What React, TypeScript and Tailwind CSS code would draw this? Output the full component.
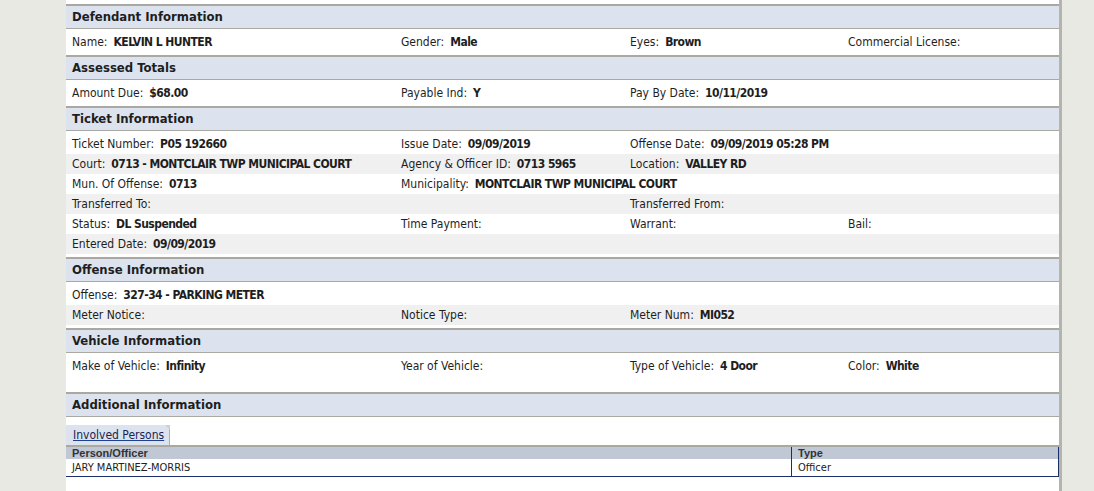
import React from "react";

type Cell = { label: string; value?: string };
type Row = { cells: (Cell | null)[]; shade?: boolean };

const font = "font-['DejaVu_Sans_Condensed','DejaVu_Sans',sans-serif]";

function Field({ cell }: { cell: Cell | null }) {
  if (!cell) return <div className="px-[6px]" />;
  return (
    <div className="px-[6px] whitespace-nowrap overflow-visible text-[12px] leading-[16px]">
      <span>{cell.label}</span>
      {cell.value ? (
        <span className="font-bold tracking-[-0.55px] ml-[6px]">{cell.value}</span>
      ) : null}
    </div>
  );
}

function Header({ title }: { title: string }) {
  return (
    <div className="h-[23px] bg-[#dce3ee] border-b border-[#a9a9a2] px-[6px] flex items-center text-[13px] leading-[16px] font-bold text-[#1e1e1e]">
      {title}
    </div>
  );
}

function Section({
  title,
  rows,
  extra,
}: {
  title: string;
  rows: Row[];
  extra?: React.ReactNode;
}) {
  return (
    <div className="border-t-2 border-[#a9a9a2]">
      <Header title={title} />
      <div className="pt-[3px] pb-[3px]">
        {rows.map((row, i) => (
          <div
            key={i}
            className={`grid grid-cols-[329px_229px_218px_1fr] h-[20px] items-center text-[#1e1e1e] ${
              row.shade ? "bg-[#f0f0f0]" : "bg-white"
            }`}
          >
            {row.cells.map((c, j) => (
              <Field key={j} cell={c} />
            ))}
          </div>
        ))}
        {extra}
      </div>
    </div>
  );
}

export default function App() {
  return (
    <div className={`h-[491px] overflow-hidden bg-[#e9e9e4] flex ${font}`}>
      <div className="w-[66px] shrink-0" />
      <div className="w-[996px] shrink-0 bg-white border-r-[3px] border-[#b4b4ae] pt-[4px]">
        <Section
          title="Defendant Information"
          rows={[
            {
              cells: [
                { label: "Name:", value: "KELVIN L HUNTER" },
                { label: "Gender:", value: "Male" },
                { label: "Eyes:", value: "Brown" },
                { label: "Commercial License:" },
              ],
            },
          ]}
        />
        <Section
          title="Assessed Totals"
          rows={[
            {
              cells: [
                { label: "Amount Due:", value: "$68.00" },
                { label: "Payable Ind:", value: "Y" },
                { label: "Pay By Date:", value: "10/11/2019" },
                null,
              ],
            },
          ]}
        />
        <Section
          title="Ticket Information"
          rows={[
            {
              cells: [
                { label: "Ticket Number:", value: "P05 192660" },
                { label: "Issue Date:", value: "09/09/2019" },
                { label: "Offense Date:", value: "09/09/2019 05:28 PM" },
                null,
              ],
            },
            {
              shade: true,
              cells: [
                { label: "Court:", value: "0713 - MONTCLAIR TWP MUNICIPAL COURT" },
                { label: "Agency & Officer ID:", value: "0713 5965" },
                { label: "Location:", value: "VALLEY RD" },
                null,
              ],
            },
            {
              cells: [
                { label: "Mun. Of Offense:", value: "0713" },
                { label: "Municipality:", value: "MONTCLAIR TWP MUNICIPAL COURT" },
                null,
                null,
              ],
            },
            {
              shade: true,
              cells: [{ label: "Transferred To:" }, null, { label: "Transferred From:" }, null],
            },
            {
              cells: [
                { label: "Status:", value: "DL Suspended" },
                { label: "Time Payment:" },
                { label: "Warrant:" },
                { label: "Bail:" },
              ],
            },
            {
              shade: true,
              cells: [{ label: "Entered Date:", value: "09/09/2019" }, null, null, null],
            },
          ]}
        />
        <Section
          title="Offense Information"
          rows={[
            {
              cells: [{ label: "Offense:", value: "327-34 - PARKING METER" }, null, null, null],
            },
            {
              shade: true,
              cells: [
                { label: "Meter Notice:" },
                { label: "Notice Type:" },
                { label: "Meter Num:", value: "MI052" },
                null,
              ],
            },
          ]}
        />
        <Section
          title="Vehicle Information"
          rows={[
            {
              cells: [
                { label: "Make of Vehicle:", value: "Infinity" },
                { label: "Year of Vehicle:" },
                { label: "Type of Vehicle:", value: "4 Door" },
                { label: "Color:", value: "White" },
              ],
            },
          ]}
          extra={<div className="h-[13px]" />}
        />
        <div className="border-t-2 border-[#a9a9a2]">
          <Header title="Additional Information" />
          <div className="pt-[8px]">
            <div className="flex">
              <div className="relative h-[20px] bg-[#dce3ee] border-r border-[#b0b0a8] pl-[7px] pr-[5px] flex items-center text-[12px] leading-[16px] text-[#1b2450]">
                <span className="underline decoration-[#1f3f8f]">Involved Persons</span>
                <span className="absolute top-0 right-[-1px] w-0 h-0 border-t-[5px] border-l-[5px] border-t-[#d0d0c4] border-l-transparent" />
              </div>
            </div>
            <div className="border-t-2 border-[#a9a9a2]">
              <div className="grid grid-cols-[725px_1fr] border-r border-b border-[#1c2f6b] text-[11px] leading-[13px] font-['Liberation_Sans',sans-serif]">
                <div className="h-[12px] bg-[#c0c8d6] px-[6px] flex items-center font-bold text-[#333]">
                  Person/Officer
                </div>
                <div className="h-[12px] bg-[#c0c8d6] px-[6px] border-l border-[#1c2f6b] flex items-center font-bold text-[#333]">
                  Type
                </div>
                <div className="h-[17px] px-[6px] flex items-center text-[#222] font-['DejaVu_Sans_Condensed',sans-serif]">
                  JARY MARTINEZ-MORRIS
                </div>
                <div className="h-[17px] px-[6px] border-l border-[#1c2f6b] flex items-center text-[#222] font-['DejaVu_Sans_Condensed',sans-serif]">
                  Officer
                </div>
              </div>
            </div>
          </div>
        </div>
      </div>
    </div>
  );
}
